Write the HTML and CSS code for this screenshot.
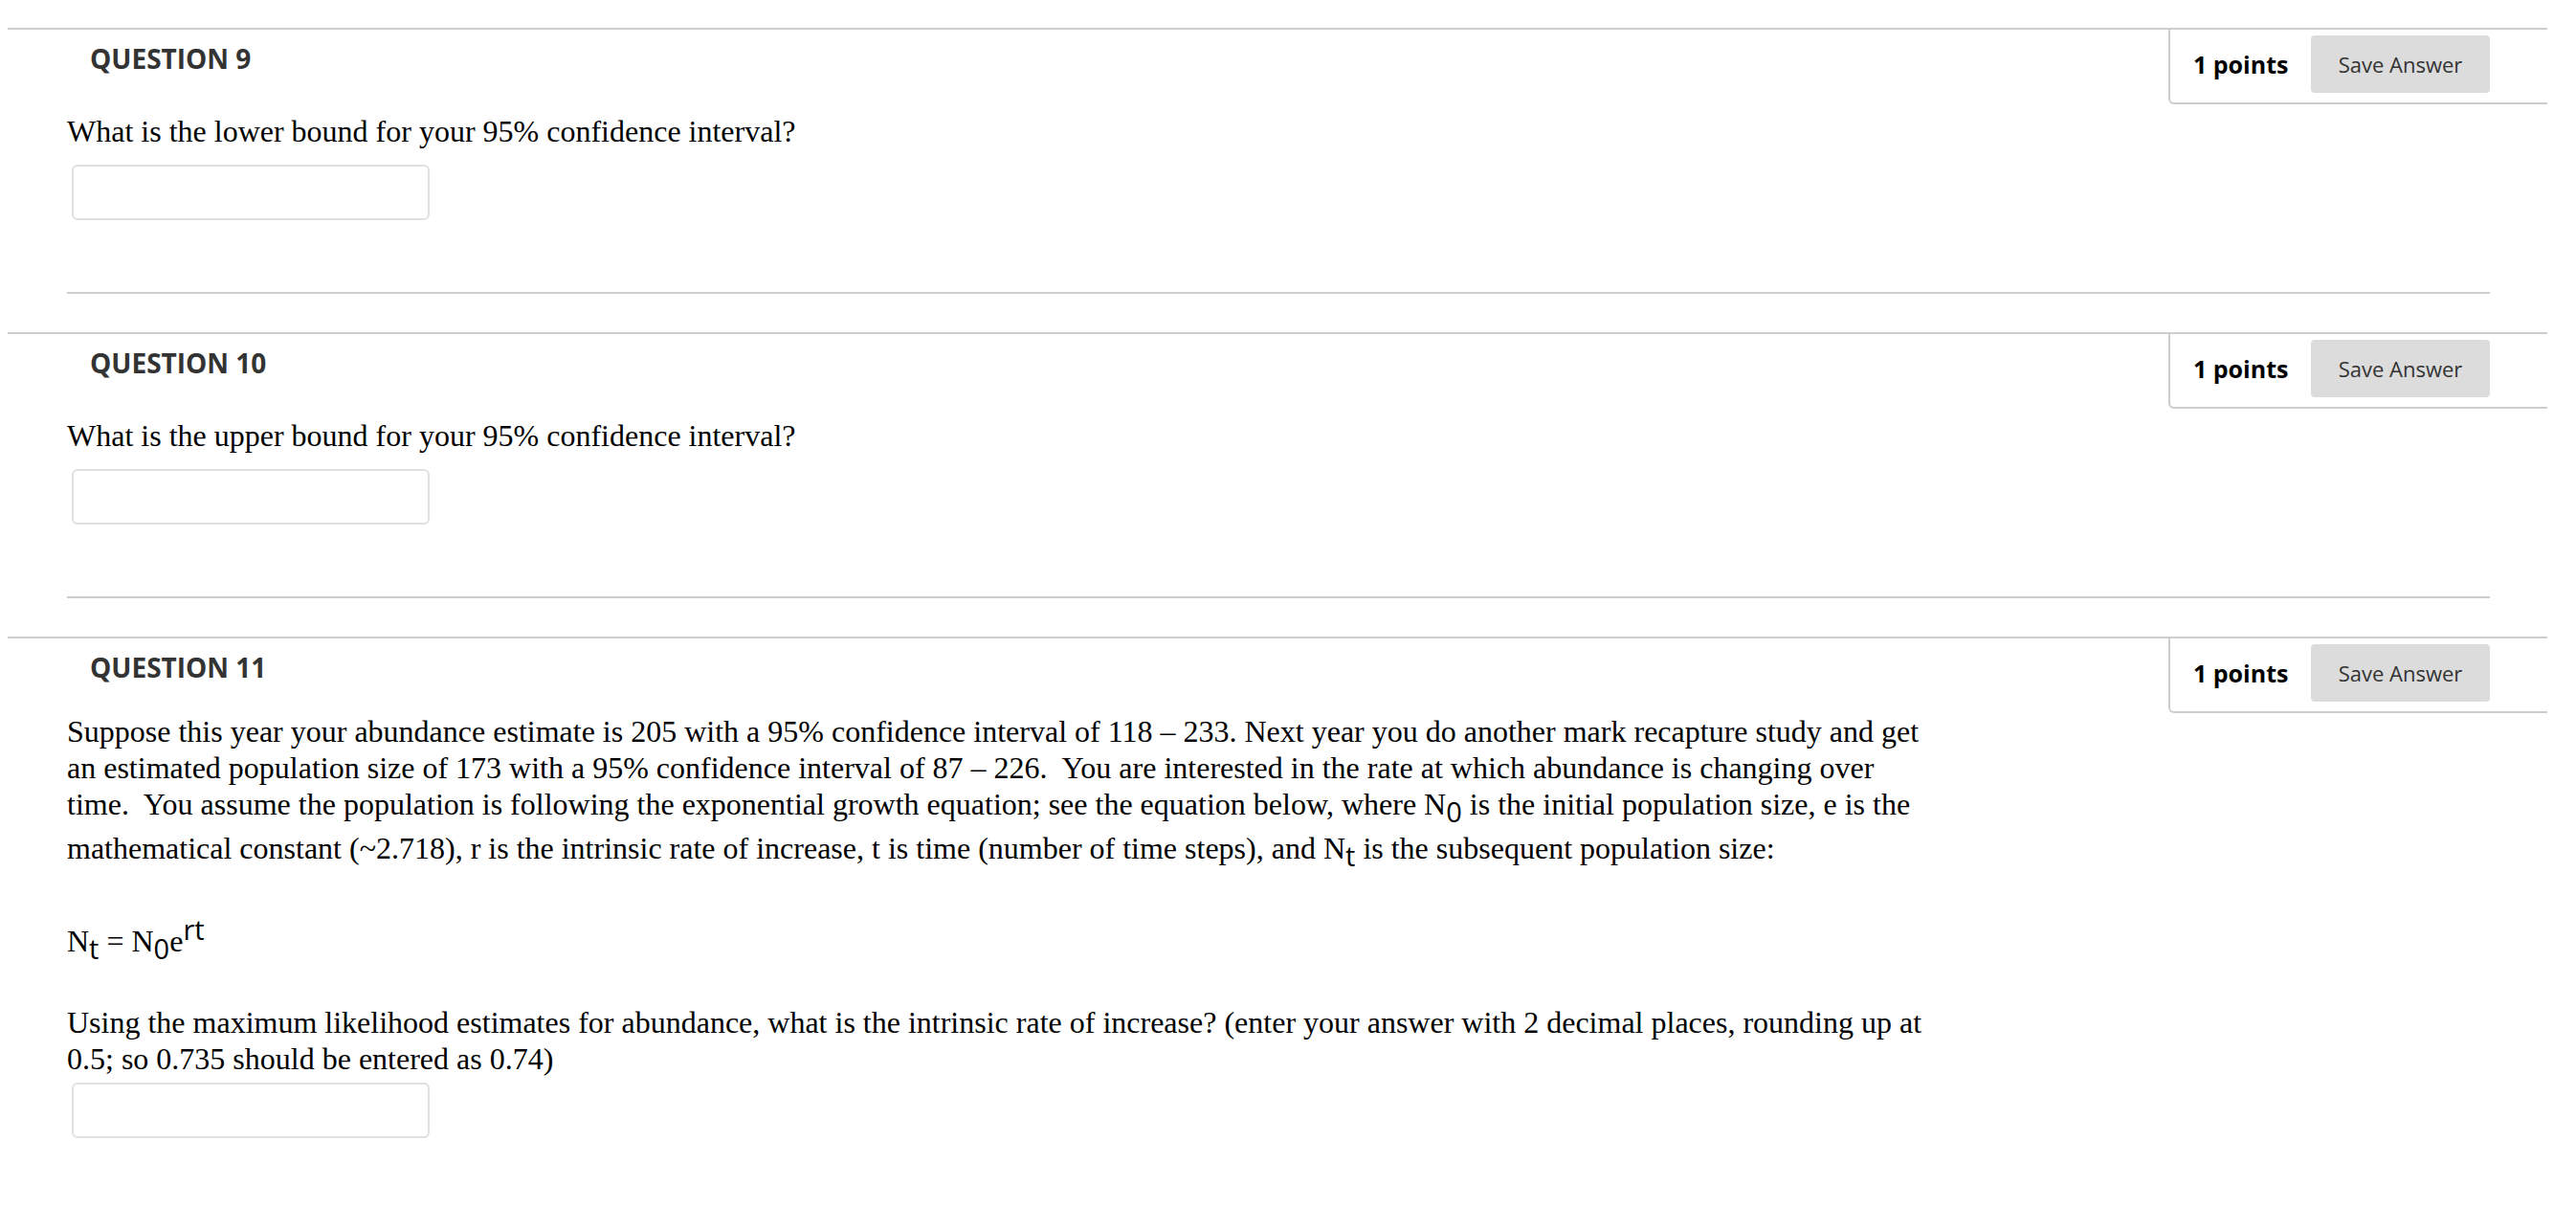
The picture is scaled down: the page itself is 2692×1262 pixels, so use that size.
FILE: index.html
```html
<!DOCTYPE html>
<html lang="en">
<head>
<meta charset="utf-8">
<title>Questions</title>
<link rel="stylesheet" href="styles.css">
</head>
<body>
<ul class="questions">
  <li class="question">
    <div class="q-header">
      <h3 class="q-title">QUESTION 9</h3>
      <div class="q-points"><span class="points">1 points</span><button class="save" type="button">Save Answer</button></div>
    </div>
    <div class="q-body">
      <p class="q-text">What is the lower bound for your 95% confidence interval?</p>
      <input class="answer" type="text">
    </div>
    <hr class="divider">
  </li>
  <li class="question">
    <div class="q-header">
      <h3 class="q-title">QUESTION 10</h3>
      <div class="q-points"><span class="points">1 points</span><button class="save" type="button">Save Answer</button></div>
    </div>
    <div class="q-body">
      <p class="q-text">What is the upper bound for your 95% confidence interval?</p>
      <input class="answer" type="text">
    </div>
    <hr class="divider">
  </li>
  <li class="question">
    <div class="q-header">
      <h3 class="q-title">QUESTION 11</h3>
      <div class="q-points"><span class="points">1 points</span><button class="save" type="button">Save Answer</button></div>
    </div>
    <div class="q-body">
      <p class="q-text q-lead">Suppose this year your abundance estimate is 205 with a 95% confidence interval of 118 – 233. Next year you do another mark recapture study and get<br>an estimated population size of 173 with a 95% confidence interval of 87 – 226.&nbsp; You are interested in the rate at which abundance is changing over<br>time.&nbsp; You assume the population is following the exponential growth equation; see the equation below, where N<sub class="lo">0</sub> is the initial population size, e is the<br>mathematical constant (~2.718), r is the intrinsic rate of increase, t is time (number of time steps), and N<sub class="lo">t</sub> is the subsequent population size:</p>
      <p class="q-text q-next">N<sub class="lo">t</sub> = N<sub class="lo">0</sub>e<sup class="hi">rt</sup></p>
      <p class="q-text q-next">Using the maximum likelihood estimates for abundance, what is the intrinsic rate of increase? (enter your answer with 2 decimal places, rounding up at<br>0.5; so 0.735 should be entered as 0.74)</p>
      <input class="answer answer-tight" type="text">
    </div>
    <hr class="divider">
  </li>
</ul>
</body>
</html>
```

FILE: styles.css
```css
html, body {
  margin: 0;
  padding: 0;
  background: #ffffff;
}

body {
  font-family: "Liberation Serif", "Times New Roman", serif;
  color: #000000;
}

.questions {
  list-style: none;
  margin: 0;
  padding: 29px 30px 0 8px;
}

.question {
  border-top: 2px solid #cdcdcd;
  margin: 0 0 40px 0;
}

.q-header {
  display: flex;
  justify-content: space-between;
  align-items: flex-start;
}

.q-title {
  margin: 11px 0 0 86px;
  font-family: "Open Sans", "Liberation Sans", sans-serif;
  font-weight: 700;
  font-size: 28px;
  line-height: 38px;
  color: #333333;
}

.q-points {
  box-sizing: border-box;
  width: 396px;
  display: flex;
  align-items: center;
  padding: 6px 60px 10px 24px;
  border-left: 2px solid #cdcdcd;
  border-bottom: 2px solid #cdcdcd;
  border-bottom-left-radius: 6px;
}

.points {
  font-family: "Open Sans", "Liberation Sans", sans-serif;
  font-weight: 700;
  font-size: 25px;
  color: #000000;
}

.save {
  margin-left: auto;
  width: 187px;
  height: 60px;
  padding: 0;
  border: 0;
  border-radius: 4px;
  background: #dcdcdc;
  font-family: "Open Sans", "Liberation Sans", sans-serif;
  font-weight: 400;
  font-size: 22px;
  color: #333333;
}

.q-body {
  padding-left: 62px;
}

.q-text {
  margin: 9px 0 0 0;
  font-size: 32px;
  line-height: 38px;
  white-space: nowrap;
}

.q-lead {
  margin-top: 0;
}

.q-next {
  margin-top: 39px;
}

.lo,
.hi {
  font-family: "Open Sans", "Liberation Sans", sans-serif;
  font-size: 29px;
}

.lo {
  vertical-align: -8px;
}

.hi {
  vertical-align: 12px;
}

.answer {
  display: block;
  box-sizing: border-box;
  width: 374px;
  height: 58px;
  margin: 16px 0 0 5px;
  padding: 0;
  border: 2px solid #e0e0e0;
  border-radius: 6px;
  background: #ffffff;
}

.answer-tight {
  margin-top: 6px;
}

.divider {
  height: 0;
  margin: 75px 60px 0 62px;
  border: 0;
  border-top: 2px solid #cdcdcd;
}
```
